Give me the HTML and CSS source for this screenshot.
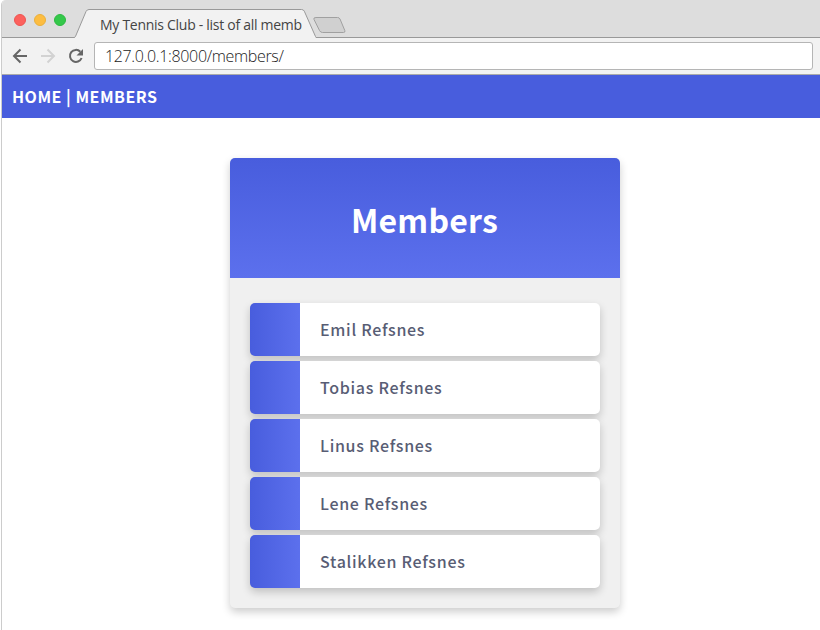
FILE: index.html
```html
<!DOCTYPE html>
<html lang="en">
<head>
<meta charset="utf-8">
<title>My Tennis Club - list of all members</title>
<link rel="stylesheet" href="styles.css">
</head>
<body>
<div class="window">
  <div class="tabstrip">
    <div class="lights"><i class="red"></i><i class="yellow"></i><i class="green"></i></div>
    <div class="tab">
      <svg class="tab-shape" width="242" height="29" viewBox="0 0 242 29"><path d="M0 29V28.5C1 28.5 1.200 28 1.500 27.400L12 2.500Q13 .5 15 .5H227.500Q229.500 .5 230.300 2.200L241.500 27.500L242 28.500V29Z" fill="#f2f2f2"/><path d="M0 28.500Q1 28.500 1.500 27.400L12 2.500Q13 .5 15 .5H227.500Q229.500 .5 230.300 2.200L241.500 27.500L242 28.500" fill="none" stroke="#999"/></svg>
      <span class="tab-title">My Tennis Club - list of all memb</span>
    </div>
    <svg class="newtab" width="36" height="19" viewBox="0 0 36 19"><path d="M4 1.500H25.500Q27.300 1.500 28 3L32.800 14.500Q33.500 16.500 31.500 16.500H10.500Q8.500 16.500 7.500 14.500L2 3.500Q1 1.500 4 1.500Z" fill="#d0d0d0" stroke="#a0a0a0"/></svg>
  </div>
  <div class="toolbar">
    <svg class="icons" width="92" height="36" viewBox="0 0 92 36" fill="none" stroke-width="2">
      <path d="M25 18H12.500M18.500 11.500L12 18L18.500 24.500" stroke="#666"/>
      <path d="M39 18H51.500M45.500 11.500L52 18L45.500 24.500" stroke="#d2d2d2"/>
      <path d="M78.300 13.700A6 6 0 1 0 79.600 20" stroke="#666"/>
      <path d="M81 11V17.500H74.500Z" fill="#666"/>
    </svg>
    <div class="address">127.0.0.1:8000/members/</div>
  </div>
  <nav class="nav"><a>HOME</a> | <a>MEMBERS</a></nav>
  <main class="card">
    <h1>Members</h1>
    <ul>
      <li>Emil Refsnes</li>
      <li>Tobias Refsnes</li>
      <li>Linus Refsnes</li>
      <li>Lene Refsnes</li>
      <li>Stalikken Refsnes</li>
    </ul>
  </main>
</div>
</body>
</html>
```
FILE: styles.css
```css
* { box-sizing: border-box; }
html, body { height: 100%; margin: 0; overflow: hidden; background: #fff; }
body { padding-left: 1px; font-family: "Noto Sans CJK SC", "Noto Sans", sans-serif; }
.window { height: 630px; border-left: 1px solid #ccc; border-top-left-radius: 5px; overflow: hidden; }
.tabstrip { display: flex; height: 38px; padding-top: 9px; background: #ddd; box-shadow: inset 0 -1px #999; }
.lights { display: flex; gap: 8px; width: 72px; padding: 5px 0 0 12px; }
.lights i { width: 12px; height: 12px; border-radius: 50%; }
.red { background: #fc615d; border: 1px solid #ee5350; }
.yellow { background: #fdbd41; border: 1px solid #eab03a; }
.green { background: #34c84a; border: 1px solid #2cb940; }
.tab { position: relative; width: 242px; height: 29px; padding-left: 26px; }
.tab-shape { position: absolute; left: 0; top: 0; }
.tab-title { position: relative; display: block; font: 400 14px/31px "Open Sans", sans-serif; letter-spacing: -.28px; color: #444; white-space: nowrap; }
.newtab { margin: 7px 0 0 -4px; position: relative; }
.toolbar { display: flex; height: 37px; background: #f2f2f2; border-bottom: 1px solid #aaa; }
.icons { flex: none; }
.address { width: 719px; height: 28px; margin-top: 4px; padding-left: 10px; border: 1px solid #b5b5b5; border-radius: 3px; background: #fff; color: #222; font: 300 16px/27px "Open Sans", sans-serif; letter-spacing: -.35px; }
.nav { height: 43px; padding-left: 10px; background: #485ddd; color: #fff; font-weight: 700; font-size: 16px; line-height: 43px; letter-spacing: .5px; }
.card { width: 390px; height: 450px; margin: 40px 0 0 228px; border-radius: 5px; background: #f0f0f0; box-shadow: 0 4px 8px rgba(0,0,0,.2); overflow: hidden; }
h1 { height: 120px; margin: 0; padding: 4px 1px 0 0; background: linear-gradient(#485ddd, #5c70ed); color: #fff; text-align: center; font-weight: 700; font-size: 32px; line-height: 114px; letter-spacing: .2px; }
ul { display: flex; flex-direction: column; gap: 5px; margin: 0; padding: 25px 20px 20px; list-style: none; }
li { height: 53px; padding-left: 70px; border-radius: 5px; background: linear-gradient(90deg, #485ddd, #5c70ed) left / 50px 100% no-repeat #fff; box-shadow: 0 4px 8px rgba(0,0,0,.2); color: #585d74; font-weight: 500; font-size: 16px; line-height: 53px; letter-spacing: .7px; }
```
